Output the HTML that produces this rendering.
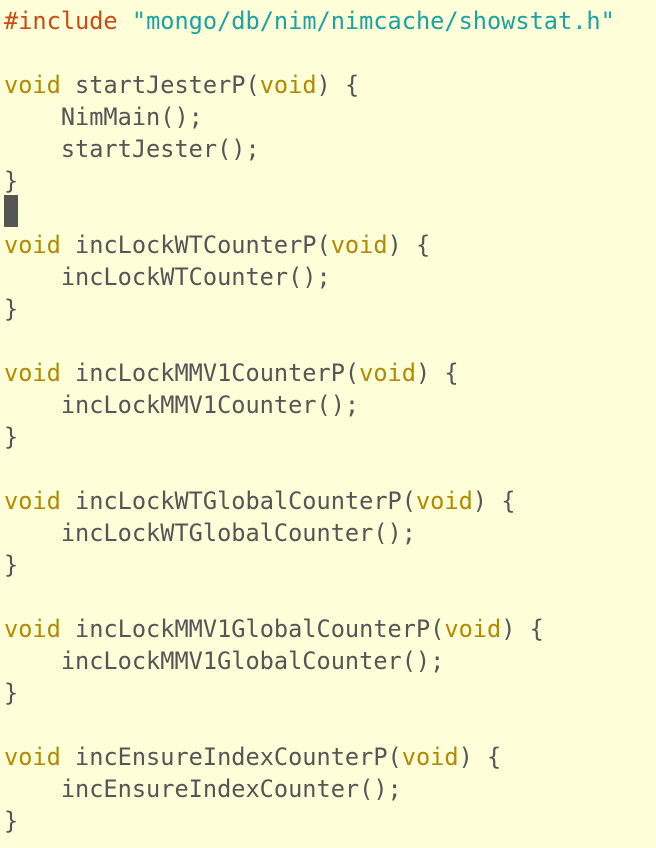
<!DOCTYPE html>
<html><head><style>
html,body{margin:0;padding:0;background:#fefed8;width:656px;height:848px;overflow:hidden}
pre{margin:0;position:absolute;left:4px;top:5px;font-family:"DejaVu Sans Mono","Liberation Mono",monospace;font-size:23.6px;line-height:32px;color:#555555}
.k{color:#b08a00}.p{color:#cb4b16}.s{color:#1aa3a3}
.c{display:inline-block;width:14px;height:32px;background:#555;vertical-align:top;margin-top:-2px}
</style></head><body><pre><span class="p">#include</span> <span class="s">"mongo/db/nim/nimcache/showstat.h"</span>

<span class="k">void</span> startJesterP(<span class="k">void</span>) {
    NimMain();
    startJester();
}
<span class="c"></span>
<span class="k">void</span> incLockWTCounterP(<span class="k">void</span>) {
    incLockWTCounter();
}

<span class="k">void</span> incLockMMV1CounterP(<span class="k">void</span>) {
    incLockMMV1Counter();
}

<span class="k">void</span> incLockWTGlobalCounterP(<span class="k">void</span>) {
    incLockWTGlobalCounter();
}

<span class="k">void</span> incLockMMV1GlobalCounterP(<span class="k">void</span>) {
    incLockMMV1GlobalCounter();
}

<span class="k">void</span> incEnsureIndexCounterP(<span class="k">void</span>) {
    incEnsureIndexCounter();
}</pre></body></html>
